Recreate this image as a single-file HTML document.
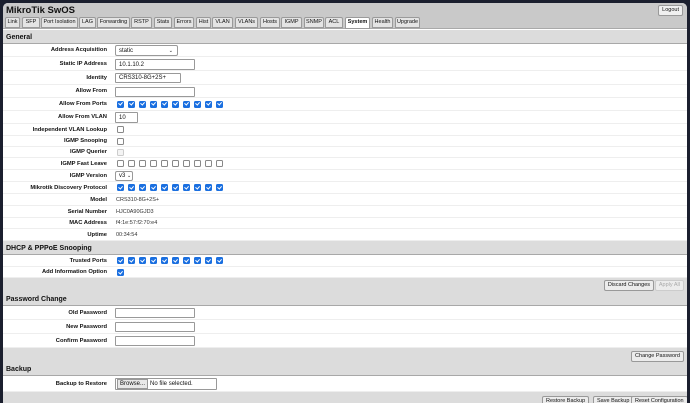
<!DOCTYPE html>
<html><head><style>
*{box-sizing:border-box;margin:0;padding:0}
body{width:690px;height:403px;background:#1b1f2e;position:relative;overflow:hidden;font-family:"Liberation Sans",sans-serif;color:#111}
#win{position:absolute;left:3px;top:3px;width:684px;height:400px;background:#fff;border-radius:5px 5px 0 0;overflow:hidden}
.a{position:absolute}
.title{left:0;top:0;width:684px;height:26px;background:#c9c9c9;border-bottom:1px solid #a9a9a9}
.title b{position:absolute;left:3px;top:2px;font-size:9.5px}
.tab{position:absolute;top:14px;height:11px;border:1px solid #9a9a9a;background:#e4e4e4;font-size:5.5px;line-height:9px;text-align:center;border-radius:2px 2px 0 0;white-space:nowrap}
.tab.on{background:#fff;font-weight:bold;height:12px}
.hdr{position:absolute;left:0;width:684px;background:#dcdcdc;border-bottom:1px solid #a8a8a8;font-size:7px;font-weight:bold}
.hdr span{position:absolute;left:3px;bottom:2px}
.row{position:absolute;left:0;width:684px;border-bottom:1px solid #eee}
.lbl{position:absolute;right:580px;top:50%;transform:translateY(-50%);font-size:5.8px;font-weight:bold;white-space:nowrap}
.val{position:absolute;left:113px;top:50%;transform:translateY(-50%);font-size:5.5px;color:#333}
.inp{position:absolute;left:112px;border:1px solid #999;background:#fff;font-size:6px;padding-left:3px;display:flex;align-items:center;border-radius:1px;white-space:nowrap}
.cb{position:absolute;width:7px;height:7px;border-radius:1.5px}
.cb.c{background:#1a6fe0}
.cb.c:after{content:"";position:absolute;left:2.2px;top:0.8px;width:1.6px;height:3.4px;border:solid #fff;border-width:0 1px 1px 0;transform:rotate(40deg)}
.cb.u{border:1px solid #888;background:#fff}
.cb.d{border:1px solid #ccc;background:#f4f4f4}
.btn{position:absolute;border:1px solid #999;background:#ececec;font-size:5.5px;line-height:9px;padding:0 3px;border-radius:2px;white-space:nowrap}
.grey{position:absolute;left:0;width:684px;background:#dcdcdc}
</style></head><body><div id="win">
<div class="a title"><b>MikroTik SwOS</b>
<div class="btn" style="right:4px;top:2px;height:11px;background:#f0f0f0">Logout</div>
<div class="tab" style="left:2px;width:15px">Link</div>
<div class="tab" style="left:19px;width:18px">SFP</div>
<div class="tab" style="left:38px;width:37px">Port Isolation</div>
<div class="tab" style="left:76px;width:17px">LAG</div>
<div class="tab" style="left:94px;width:33px">Forwarding</div>
<div class="tab" style="left:128px;width:21px">RSTP</div>
<div class="tab" style="left:151px;width:18px">Stats</div>
<div class="tab" style="left:171px;width:20px">Errors</div>
<div class="tab" style="left:193px;width:15px">Hist</div>
<div class="tab" style="left:209px;width:21px">VLAN</div>
<div class="tab" style="left:232px;width:23px">VLANs</div>
<div class="tab" style="left:257px;width:20px">Hosts</div>
<div class="tab" style="left:278px;width:21px">IGMP</div>
<div class="tab" style="left:301px;width:20px">SNMP</div>
<div class="tab" style="left:322px;width:18px">ACL</div>
<div class="tab on" style="left:342px;width:25px">System</div>
<div class="tab" style="left:369px;width:21px">Health</div>
<div class="tab" style="left:392px;width:25px">Upgrade</div>
</div>
<div class="hdr" style="top:27px;height:14px"><span>General</span></div>

<div class="row" style="top:41px;height:13px"><div class="lbl">Address Acquisition</div><div class="inp" style="top:1px;width:63px;height:11px;border-radius:2px">static<span style="position:absolute;right:4px;font-size:5px">⌄</span></div></div>
<div class="row" style="top:54px;height:14px"><div class="lbl">Static IP Address</div><div class="inp" style="top:2px;width:80px;height:11px">10.1.10.2</div></div>
<div class="row" style="top:68px;height:14px"><div class="lbl">Identity</div><div class="inp" style="top:2px;width:66px;height:10px">CRS310-8G+2S+</div></div>
<div class="row" style="top:82px;height:13px"><div class="lbl">Allow From</div><div class="inp" style="top:2px;width:80px;height:10px"></div></div>
<div class="row" style="top:95px;height:13px"><div class="lbl">Allow From Ports</div><div id="p1"></div></div>
<div class="row" style="top:108px;height:13px"><div class="lbl">Allow From VLAN</div><div class="inp" style="top:1px;width:23px;height:11px">10</div></div>
<div class="row" style="top:121px;height:12px"><div class="lbl">Independent VLAN Lookup</div><div class="cb u" style="left:114px;top:2px"></div></div>
<div class="row" style="top:133px;height:11px"><div class="lbl">IGMP Snooping</div><div class="cb u" style="left:114px;top:2px"></div></div>
<div class="row" style="top:144px;height:11px"><div class="lbl">IGMP Querier</div><div class="cb d" style="left:114px;top:2px"></div></div>
<div class="row" style="top:155px;height:12px"><div class="lbl">IGMP Fast Leave</div><div id="p2"></div></div>
<div class="row" style="top:167px;height:12px"><div class="lbl">IGMP Version</div><div class="inp" style="top:1px;width:18px;height:10px;border-radius:2px">v3&nbsp;<span style="font-size:5px">⌄</span></div></div>
<div class="row" style="top:179px;height:12px"><div class="lbl">Mikrotik Discovery Protocol</div><div id="p3"></div></div>
<div class="row" style="top:191px;height:12px"><div class="lbl">Model</div><div class="val">CRS310-8G+2S+</div></div>
<div class="row" style="top:203px;height:12px"><div class="lbl">Serial Number</div><div class="val">HJC0A90GJD3</div></div>
<div class="row" style="top:215px;height:11px"><div class="lbl">MAC Address</div><div class="val">f4:1e:57:f2:70:e4</div></div>
<div class="row" style="top:226px;height:12px"><div class="lbl">Uptime</div><div class="val">00:34:54</div></div>
<div class="hdr" style="top:238px;height:14px"><span>DHCP &amp; PPPoE Snooping</span></div>
<div class="row" style="top:252px;height:12px"><div class="lbl">Trusted Ports</div><div id="p4"></div></div>
<div class="row" style="top:264px;height:11px"><div class="lbl">Add Information Option</div><div class="cb c" style="left:114px;top:2px"></div></div>
<div class="hdr" style="top:275px;height:28px"><span>Password Change</span>
<div class="btn" style="right:33px;top:2px;height:11px;font-weight:normal;color:#111">Discard Changes</div>
<div class="btn" style="right:3px;top:2px;height:11px;font-weight:normal;color:#aaa;border-color:#ccc">Apply All</div></div>
<div class="row" style="top:303px;height:14px"><div class="lbl">Old Password</div><div class="inp" style="top:2px;width:80px;height:10px"></div></div>
<div class="row" style="top:317px;height:14px"><div class="lbl">New Password</div><div class="inp" style="top:2px;width:80px;height:10px"></div></div>
<div class="row" style="top:331px;height:14px"><div class="lbl">Confirm Password</div><div class="inp" style="top:2px;width:80px;height:10px"></div></div>
<div class="hdr" style="top:345px;height:28px"><span>Backup</span>
<div class="btn" style="right:3px;top:3px;height:11px;font-weight:normal">Change Password</div></div>
<div class="row" style="top:373px;height:16px"><div class="lbl">Backup to Restore</div>
<div class="inp" style="top:2px;width:102px;height:12px;padding:1px;font-size:6px"><span style="border:1px solid #999;background:#e8e8e8;padding:0 2px;display:inline-block;line-height:8px;margin-right:2px">Browse...</span>No file selected.</div></div>
<div class="grey" style="top:389px;height:11px"><div class="btn" style="left:539px;top:4px;height:10px">Restore Backup</div><div class="btn" style="left:590px;top:4px;height:10px">Save Backup</div><div class="btn" style="left:628px;top:4px;height:10px">Reset Configuration</div></div>
</div>
<script>
function cbs(id,cls){var e=document.getElementById(id),p=e.parentNode;e.remove();for(var i=0;i<10;i++){var d=document.createElement('div');d.className='cb '+cls;d.style.left=(114+i*11)+'px';d.style.top='50%';d.style.marginTop='-3.5px';p.appendChild(d);}}
cbs('p1','c');cbs('p2','u');cbs('p3','c');cbs('p4','c');
</script>
</body></html>
